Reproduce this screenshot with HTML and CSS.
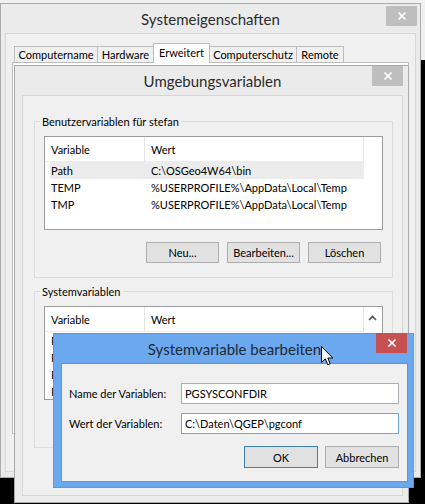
FILE: index.html
```html
<!DOCTYPE html>
<html lang="de">
<head>
<meta charset="utf-8">
<title>Systemvariable bearbeiten</title>
<link rel="stylesheet" href="styles.css">
</head>
<body>
<div class="desk">
  <div class="bgwin"></div>

  <section class="win outer">
    <header class="titlebar">Systemeigenschaften</header>
    <span class="close"><svg width="10" height="10" viewBox="0 0 10 10"><path d="M1.5 1.5L8.5 8.5M8.5 1.5L1.5 8.5" stroke="#fff" stroke-width="1.7"/></svg></span>
    <div class="client">
      <nav class="tabs">
        <span class="tab t1">Computername</span>
        <span class="tab t2">Hardware</span>
        <span class="tab t3 sel">Erweitert</span>
        <span class="tab t4">Computerschutz</span>
        <span class="tab t5">Remote</span>
      </nav>
      <div class="tabpanel"></div>
    </div>
  </section>

  <section class="win env">
    <header class="titlebar">Umgebungsvariablen</header>
    <span class="close"><svg width="10" height="10" viewBox="0 0 10 10"><path d="M1.5 1.5L8.5 8.5M8.5 1.5L1.5 8.5" stroke="#fff" stroke-width="1.7"/></svg></span>
    <div class="client envclient">
      <fieldset class="group g1">
        <legend>Benutzervariablen für stefan</legend>
        <div class="list">
          <div class="lmain">
            <div class="lhead"><span class="hc c1">Variable</span><span class="hc c2">Wert</span></div>
            <div class="row sel"><span>Path</span><span>C:\OSGeo4W64\bin</span></div>
            <div class="row"><span>TEMP</span><span>%USERPROFILE%\AppData\Local\Temp</span></div>
            <div class="row"><span>TMP</span><span>%USERPROFILE%\AppData\Local\Temp</span></div>
          </div>
          <div class="lside"></div>
        </div>
        <div class="btnrow">
          <button class="btn">Neu...</button>
          <button class="btn">Bearbeiten...</button>
          <button class="btn">Löschen</button>
        </div>
      </fieldset>
      <fieldset class="group g2">
        <legend>Systemvariablen</legend>
        <div class="list">
          <div class="lmain">
            <div class="lhead"><span class="hc c1">Variable</span><span class="hc c2">Wert</span></div>
            <div class="row"><span>Path</span><span></span></div>
            <div class="row"><span>PATHEXT</span><span></span></div>
            <div class="row"><span>PGSYSCONF</span><span></span></div>
            <div class="row"><span>PSModule</span><span></span></div>
          </div>
          <div class="lside"><svg class="chev" width="9" height="6" viewBox="0 0 9 6"><path d="M1 5L4.5 1.5L8 5" fill="none" stroke="#555" stroke-width="1.6"/></svg></div>
        </div>
      </fieldset>
    </div>
  </section>

  <section class="win dialog">
    <header class="titlebar">Systemvariable bearbeiten</header>
    <span class="close red"><svg width="10" height="10" viewBox="0 0 10 10"><path d="M1.5 1.5L8.5 8.5M8.5 1.5L1.5 8.5" stroke="#fff" stroke-width="1.7"/></svg></span>
    <div class="client dclient">
      <div class="frow">
        <label class="flabel">Name der Variablen:</label>
        <div class="finput">PGSYSCONFDIR</div>
      </div>
      <div class="frow second">
        <label class="flabel">Wert der Variablen:</label>
        <div class="finput focus">C:\Daten\QGEP\pgconf</div>
      </div>
      <div class="dbtns">
        <button class="btn dbtn default">OK</button>
        <button class="btn dbtn">Abbrechen</button>
      </div>
    </div>
  </section>

  <svg class="cursor" width="13" height="21" viewBox="0 0 13 21"><path d="M0.5 0.5L0.5 16.5L4.3 12.8L6.8 18.8L9.2 17.8L6.8 12L11.8 12Z" fill="#fff" stroke="#000" stroke-width="1" stroke-linejoin="round"/></svg>
</div>
</body>
</html>
```

FILE: styles.css
```css
* { box-sizing: border-box; }

body {
  margin: 0;
  font-family: Lato, "Noto Sans", sans-serif;
  font-size: 11px;
  color: #000;
}

.desk {
  position: relative;
  width: 425px;
  height: 504px;
  background: #000;
  overflow: hidden;
}

.bgwin {
  position: absolute;
  left: 0;
  top: -10px;
  width: 425px;
  height: 70px;
  background: #f0f0f0;
}

/* generic window */
.win {
  position: absolute;
  display: flex;
  flex-direction: column;
  background: #ebebeb;
  border: 1px solid #ababab;
}

.titlebar {
  flex: none;
  height: 29px;
  display: flex;
  align-items: center;
  justify-content: center;
  font-size: 15px;
  color: #2b2b2b;
}

.close {
  position: absolute;
  width: 31px;
  height: 20px;
  display: flex;
  align-items: center;
  justify-content: center;
  background: #bebebe;
}

.close.red { background: #c75050; }

.client {
  flex: 1;
  min-height: 0;
  background: #f0f0f0;
  border: 1px solid #d6d6d6;
}

/* Systemeigenschaften */
.outer {
  left: 0;
  top: 3px;
  width: 421px;
  height: 475px;
  padding: 0 4px 5px 4px;
}
.outer .close { top: 2px; right: 3px; }

.tabs {
  display: flex;
  align-items: flex-end;
  height: 28px;
  margin-left: 8px;
  position: relative;
  z-index: 1;
}

.tab {
  height: 16px;
  border: 1px solid #bcbcbc;
  border-bottom: none;
  margin-right: -1px;
  background: #f0f0f0;
  display: flex;
  align-items: center;
  justify-content: center;
  white-space: nowrap;
}
.tab.sel {
  height: 20px;
  margin-bottom: -1px;
  background: #fff;
  padding-bottom: 3px;
}
.t1 { width: 84px; }
.t2 { width: 57px; }
.t3 { width: 57px; }
.t4 { width: 88px; }
.t5 { width: 48px; }

.tabpanel {
  margin-left: 6px;
  width: 397px;
  height: 372px;
  border: 1px solid #bcbcbc;
  background: #fff;
}

/* Umgebungsvariablen */
.env {
  left: 14px;
  top: 65px;
  width: 395px;
  height: 438px;
  padding: 0 5px 6px 7px;
}
.env .close { top: 0; right: 5px; }

.group {
  margin: 0 9px 0 11px;
  padding: 0 9px 14px 9px;
  border: 1px solid #dcdcdc;
  min-width: 0;
}
.g1 { margin-top: 18px; }
.g2 { margin-top: 6px; padding-bottom: 47px; }

.group legend {
  margin-left: -4px;
  padding: 0 2px;
  line-height: 15px;
}

.list {
  margin-top: 7px;
  height: 94px;
  border: 1px solid #9c9c9c;
  background: #fff;
  display: flex;
  overflow: hidden;
}

.lmain { flex: 1; min-width: 0; }
.lside { width: 18px; flex: none; }
.chev { display: block; margin: 8px 0 0 4px; }

.lhead {
  display: flex;
  height: 25px;
}
.hc {
  display: flex;
  align-items: center;
  padding-left: 6px;
  border-right: 1px solid #e5e5e5;
  border-bottom: 1px solid #ececec;
}
.c1 { width: 100px; }
.c2 { flex: 1; }

.row {
  display: grid;
  grid-template-columns: 100px 1fr;
  height: 17px;
  align-items: center;
  margin-left: 5px;
  white-space: nowrap;
}
.row span { padding-left: 1px; }
.row.sel { background: #ececec; }

.btnrow {
  display: flex;
  justify-content: flex-end;
  gap: 8px;
  margin: 12px 2px 0 0;
}

.btn {
  width: 73px;
  height: 21px;
  padding: 0;
  font: inherit;
  color: #000;
  background: #e1e1e1;
  border: 1px solid #adadad;
}

/* Systemvariable bearbeiten */
.dialog {
  left: 53px;
  top: 333px;
  width: 361px;
  height: 155px;
  padding: 0 5px 5px 7px;
  background: #6ca8ee;
  border-color: #5b98e0;
}
.dialog .titlebar { color: #1d2a38; }
.dialog .close { top: -1px; right: 6px; }

.dclient {
  border-color: #5a95dc;
  padding: 19px 8px 0 7px;
}

.frow {
  display: flex;
  align-items: center;
  height: 21px;
}
.frow.second { margin-top: 9px; }

.flabel { width: 112px; flex: none; }

.finput {
  width: 218px;
  height: 21px;
  display: flex;
  align-items: center;
  padding-left: 3px;
  background: #fff;
  border: 1px solid #abadb3;
}
.finput.focus { border-color: #6ea5e0; }

.dbtns {
  display: flex;
  justify-content: flex-end;
  gap: 7px;
  margin-top: 12px;
}
.dbtn { width: 74px; height: 22px; }
.dbtn.default { border-color: #3c7fb1; }

.cursor {
  position: absolute;
  left: 321px;
  top: 346px;
}
```
